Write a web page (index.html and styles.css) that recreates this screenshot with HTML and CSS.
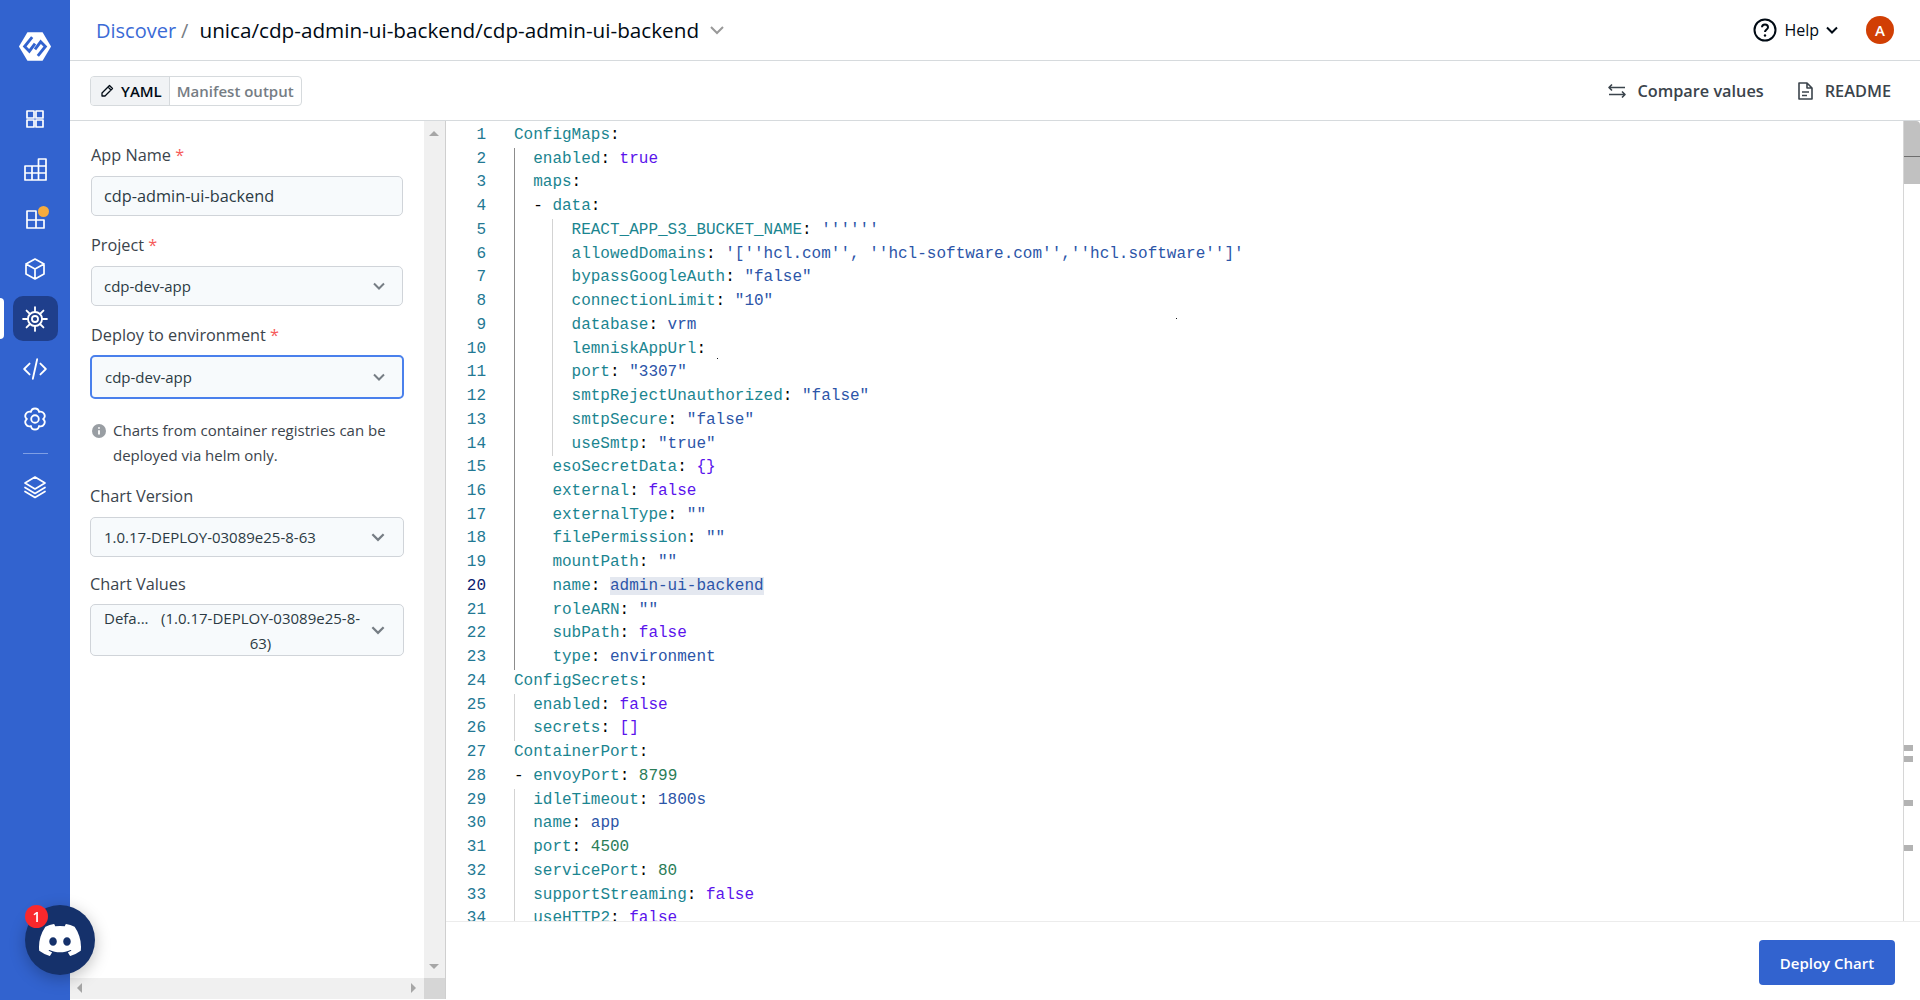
FILE: index.html
```html
<!DOCTYPE html>
<html>
<head>
	<meta name="viewport" content="width=device-width, initial-scale=1">
	<title>Deploy Chart</title>
	<link rel="stylesheet" href="styles.css">
</head>
<body>
	<nav class="sidebar">
		<svg class="logo" width="34" height="31" viewBox="0 0 36 32">
			<path class="logo-hex" d="M10 1H26L35 16L26 31H10L1 16Z"/>
			<path class="logo-cut" d="M15 6L7 16L12 21L18 13M21 26L29 16L24 11L18 19"/>
		</svg>
		<div class="nav-item">
			<svg width="24" height="24" viewBox="0 0 24 24"><rect x="4" y="4" width="7" height="7"/><rect x="13" y="4" width="7" height="7"/><rect x="4" y="13" width="7" height="7"/><rect x="13" y="13" width="7" height="7"/></svg>
		</div>
		<div class="nav-item">
			<svg width="24" height="24" viewBox="0 0 24 24"><path d="M2 9H15.500V2H23V23H2ZM2 16H23M9 9V23M15.500 9V23M15.500 9H23"/></svg>
		</div>
		<div class="nav-item">
			<svg width="24" height="24" viewBox="0 0 24 24"><path d="M4 4H13V21H4ZM4 13H21V21H13"/></svg>
			<span class="nav-dot"></span>
		</div>
		<div class="nav-item">
			<svg width="24" height="24" viewBox="0 0 24 24"><path d="M12 2L21 7V17L12 22L3 17V7ZM3 7L12 12L21 7M12 12V22"/></svg>
		</div>
		<div class="nav-item active">
			<svg width="26" height="26" viewBox="0 0 24 24"><circle cx="12" cy="12" r="6.500"/><circle cx="12" cy="12" r="2.800"/><path d="M12 1V5.500M12 18.500V23M1 12H5.500M18.500 12H23M4.200 4.200L7.400 7.400M16.600 16.600L19.800 19.800M4.200 19.800L7.400 16.600M16.600 7.400L19.800 4.200"/></svg>
		</div>
		<div class="nav-item">
			<svg width="26" height="26" viewBox="0 0 24 24"><path d="M7 7L2 12L7 17M17 7L22 12L17 17M14 3L10 21"/></svg>
		</div>
		<div class="nav-item">
			<svg width="26" height="26" viewBox="0 0 24 24"><circle cx="12" cy="12" r="3.500"/><path d="M19.500 12A3.800 3.800 0 0 0 15.750 5.500A3.800 3.800 0 0 0 8.250 5.500A3.800 3.800 0 0 0 4.500 12A3.800 3.800 0 0 0 8.250 18.500A3.800 3.800 0 0 0 15.750 18.500A3.800 3.800 0 0 0 19.500 12Z"/></svg>
		</div>
		<div class="nav-divider"></div>
		<div class="nav-item">
			<svg width="24" height="24" viewBox="0 0 24 24"><path d="M12 2L22 8L12 14L2 8ZM2 12.500L12 18.500L22 12.500M2 16.500L12 22.500L22 16.500"/></svg>
		</div>
	</nav>

	<div class="main">
		<header class="topbar">
			<a class="crumb">Discover</a>
			<span class="crumb-sep">/</span>
			<span class="app-title">unica/cdp-admin-ui-backend/cdp-admin-ui-backend</span>
			<svg class="title-caret" width="20" height="20" viewBox="0 0 20 20"><path d="M4 7L10 13L16 7"/></svg>
			<div class="topbar-right">
				<svg width="24" height="24" viewBox="0 0 24 24" class="help-icon"><circle cx="12" cy="12" r="10.500"/><path d="M9 9.300C9 5.500 15 5.500 15 9.300C15 11.500 12 11.500 12 14"/><circle class="help-dot" cx="12" cy="17.500" r="1.200"/></svg>
				<span class="help-text">Help</span>
				<svg class="help-caret" width="14" height="14" viewBox="0 0 14 14"><path d="M2 4.500L7 9.500L12 4.500"/></svg>
				<span class="avatar">A</span>
			</div>
		</header>

		<div class="toolbar">
			<div class="tabs">
				<div class="tab active">
					<svg width="14" height="14" viewBox="0 0 14 14"><path d="M9.500 1.500L12.500 4.500L5 12H2V9ZM8 3L11 6"/></svg>
					YAML
				</div>
				<div class="tab">Manifest output</div>
			</div>
			<div class="toolbar-right">
				<div class="tool-link">
					<svg width="20" height="20" viewBox="0 0 20 20"><path d="M2 6.500H18M5 3.500L2 6.500L5 9.500M18 13.500H2M15 10.500L18 13.500L15 16.500"/></svg>
					Compare values
				</div>
				<div class="tool-link readme">
					<svg width="16" height="18" viewBox="0 0 16 18"><path d="M2 1H10L15 6V17H2ZM10 1V6H15M5 10H12M5 13.500H10"/></svg>
					README
				</div>
			</div>
		</div>

		<div class="content">
			<aside class="form-panel">
				<div class="form-scroll">
					<label class="field-label">App Name <span class="req">*</span></label>
					<div class="input app-name">cdp-admin-ui-backend</div>

					<label class="field-label">Project <span class="req">*</span></label>
					<div class="input select">cdp-dev-app
						<svg class="caret" width="16" height="16" viewBox="0 0 16 16"><path d="M3 5.500L8 10.500L13 5.500"/></svg>
					</div>

					<label class="field-label env-label">Deploy to environment <span class="req">*</span></label>
					<div class="input select focused">cdp-dev-app
						<svg class="caret" width="16" height="16" viewBox="0 0 16 16"><path d="M3 5.500L8 10.500L13 5.500"/></svg>
					</div>

					<div class="note">
						<svg width="14" height="14" viewBox="0 0 14 14"><circle class="note-bg" cx="7" cy="7" r="7"/><path class="note-i" d="M7 6.200V10.500M7 3.300V4.800"/></svg>
						<p>Charts from container registries can be deployed via helm only.</p>
					</div>

					<label class="field-label chart-label">Chart Version</label>
					<div class="input select chart">1.0.17-DEPLOY-03089e25-8-63
						<svg class="caret" width="18" height="18" viewBox="0 0 16 16"><path d="M3 5.500L8 10.500L13 5.500"/></svg>
					</div>

					<label class="field-label values-label">Chart Values</label>
					<div class="input select chart values">
						<span class="values-name">Defa...</span>
						<span class="values-version">(1.0.17-DEPLOY-03089e25-8-63)</span>
						<svg class="caret" width="18" height="18" viewBox="0 0 16 16"><path d="M3 5.500L8 10.500L13 5.500"/></svg>
					</div>
				</div>
				<div class="scroll-v">
					<span class="arrow up"></span>
					<span class="arrow down"></span>
				</div>
				<div class="scroll-h">
					<span class="arrow left"></span>
					<span class="arrow right"></span>
				</div>
				<div class="scroll-corner"></div>
			</aside>

			<section class="editor">
				<div class="editor-body">
					<div class="gutter">
						<div>1</div><div>2</div><div>3</div><div>4</div><div>5</div><div>6</div><div>7</div><div>8</div><div>9</div><div>10</div>
						<div>11</div><div>12</div><div>13</div><div>14</div><div>15</div><div>16</div><div>17</div><div>18</div><div>19</div>
						<div class="current">20</div>
						<div>21</div><div>22</div><div>23</div><div>24</div><div>25</div><div>26</div><div>27</div><div>28</div><div>29</div><div>30</div>
						<div>31</div><div>32</div><div>33</div><div>34</div>
					</div>
					<div class="code">
						<div class="line"><span class="k">ConfigMaps</span>:</div>
						<div class="guide strong">
							<div class="line"><span class="k">enabled</span>: <span class="b">true</span></div>
							<div class="line"><span class="k">maps</span>:</div>
							<div class="line">- <span class="k">data</span>:</div>
							<div class="guide nested">
								<div class="line"><span class="k">REACT_APP_S3_BUCKET_NAME</span>: <span class="s">''''''</span></div>
								<div class="line"><span class="k">allowedDomains</span>: <span class="s">'[''hcl.com'', ''hcl-software.com'',''hcl.software'']'</span></div>
								<div class="line"><span class="k">bypassGoogleAuth</span>: <span class="s">"false"</span></div>
								<div class="line"><span class="k">connectionLimit</span>: <span class="s">"10"</span></div>
								<div class="line"><span class="k">database</span>: <span class="s">vrm</span></div>
								<div class="line"><span class="k">lemniskAppUrl</span>:</div>
								<div class="line"><span class="k">port</span>: <span class="s">"3307"</span></div>
								<div class="line"><span class="k">smtpRejectUnauthorized</span>: <span class="s">"false"</span></div>
								<div class="line"><span class="k">smtpSecure</span>: <span class="s">"false"</span></div>
								<div class="line"><span class="k">useSmtp</span>: <span class="s">"true"</span></div>
							</div>
							<div class="line">  <span class="k">esoSecretData</span>: <span class="b">{}</span></div>
							<div class="line">  <span class="k">external</span>: <span class="b">false</span></div>
							<div class="line">  <span class="k">externalType</span>: <span class="s">""</span></div>
							<div class="line">  <span class="k">filePermission</span>: <span class="s">""</span></div>
							<div class="line">  <span class="k">mountPath</span>: <span class="s">""</span></div>
							<div class="line">  <span class="k">name</span>: <span class="s mark">admin-ui-backend</span></div>
							<div class="line">  <span class="k">roleARN</span>: <span class="s">""</span></div>
							<div class="line">  <span class="k">subPath</span>: <span class="b">false</span></div>
							<div class="line">  <span class="k">type</span>: <span class="s">environment</span></div>
						</div>
						<div class="line"><span class="k">ConfigSecrets</span>:</div>
						<div class="guide">
							<div class="line"><span class="k">enabled</span>: <span class="b">false</span></div>
							<div class="line"><span class="k">secrets</span>: <span class="b">[]</span></div>
						</div>
						<div class="line"><span class="k">ContainerPort</span>:</div>
						<div class="line">- <span class="k">envoyPort</span>: <span class="n">8799</span></div>
						<div class="guide">
							<div class="line"><span class="k">idleTimeout</span>: <span class="s">1800s</span></div>
							<div class="line"><span class="k">name</span>: <span class="s">app</span></div>
							<div class="line"><span class="k">port</span>: <span class="n">4500</span></div>
							<div class="line"><span class="k">servicePort</span>: <span class="n">80</span></div>
							<div class="line"><span class="k">supportStreaming</span>: <span class="b">false</span></div>
							<div class="line"><span class="k">useHTTP2</span>: <span class="b">false</span></div>
						</div>
						<span class="speck s1"></span>
						<span class="speck s2"></span>
					</div>
					<div class="ruler">
						<div class="slider"><span class="slider-line"></span></div>
						<span class="mark-tick t1"></span>
						<span class="mark-tick t2"></span>
						<span class="mark-tick t3"></span>
						<span class="mark-tick t4"></span>
					</div>
				</div>
				<footer class="editor-foot">
					<button class="deploy-btn">Deploy Chart</button>
				</footer>
			</section>
		</div>
	</div>

	<div class="discord">
		<svg width="42" height="42" viewBox="0 0 24 24"><path d="M20.317 4.37a19.791 19.791 0 0 0-4.885-1.515.074.074 0 0 0-.079.037c-.21.375-.444.864-.608 1.25a18.27 18.27 0 0 0-5.487 0 12.64 12.64 0 0 0-.617-1.25.077.077 0 0 0-.079-.037A19.736 19.736 0 0 0 3.677 4.37a.07.07 0 0 0-.032.027C.533 9.046-.32 13.58.099 18.057a.082.082 0 0 0 .031.057 19.9 19.9 0 0 0 5.993 3.03.078.078 0 0 0 .084-.028 14.09 14.09 0 0 0 1.226-1.994.076.076 0 0 0-.041-.106 13.107 13.107 0 0 1-1.872-.892.077.077 0 0 1-.008-.128 10.2 10.2 0 0 0 .372-.292.074.074 0 0 1 .077-.01c3.928 1.793 8.18 1.793 12.062 0a.074.074 0 0 1 .078.01c.12.098.246.198.373.292a.077.077 0 0 1-.006.127 12.299 12.299 0 0 1-1.873.892.077.077 0 0 0-.041.107c.36.698.772 1.362 1.225 1.993a.076.076 0 0 0 .084.028 19.839 19.839 0 0 0 6.002-3.03.077.077 0 0 0 .032-.054c.5-5.177-.838-9.674-3.549-13.66a.061.061 0 0 0-.031-.03zM8.02 15.33c-1.183 0-2.157-1.085-2.157-2.419 0-1.333.956-2.419 2.157-2.419 1.21 0 2.176 1.096 2.157 2.42 0 1.333-.956 2.418-2.157 2.418zm7.975 0c-1.183 0-2.157-1.085-2.157-2.419 0-1.333.955-2.419 2.157-2.419 1.21 0 2.176 1.096 2.157 2.42 0 1.333-.946 2.418-2.157 2.418z"/></svg>
		<span class="discord-badge">1</span>
	</div>
</body>
</html>
```

FILE: styles.css
```css
* {
	box-sizing: border-box;
}
body {
	margin: 0;
	height: 1000px;
	overflow: hidden;
	display: flex;
	background-color: #ffffff;
	font-family: "Open Sans", Arial, sans-serif;
	font-size: 14px;
	color: #2c3a44;
}

/* left nav */
.sidebar {
	width: 70px;
	flex-shrink: 0;
	background-color: #3263cf;
	display: flex;
	flex-direction: column;
	align-items: center;
	padding-top: 31px;
	position: relative;
}
.logo {
	margin-bottom: 34px;
}
.logo-hex {
	fill: #ffffff;
}
.logo-cut {
	fill: none;
	stroke: #3263cf;
	stroke-width: 3;
}
.nav-item {
	width: 45px;
	height: 45px;
	margin-bottom: 5px;
	border-radius: 10px;
	display: flex;
	align-items: center;
	justify-content: center;
	position: relative;
}
.nav-item svg {
	fill: none;
	stroke: #ffffff;
	stroke-width: 1.700;
	stroke-linejoin: round;
	stroke-linecap: round;
}
.nav-item.active {
	background-color: #1f3f8c;
}
.nav-item.active::before {
	content: "";
	position: absolute;
	left: -13px;
	top: 2px;
	width: 4px;
	height: 41px;
	background-color: #ffffff;
	border-radius: 0 4px 4px 0;
}
.nav-dot {
	position: absolute;
	top: 10px;
	right: 9px;
	width: 11px;
	height: 11px;
	border-radius: 50%;
	background-color: #f6ac3f;
}
.nav-divider {
	width: 25px;
	height: 1px;
	background-color: #7f9fe4;
	margin: 7px 0 10px;
}

/* page */
.main {
	flex: 1;
	min-width: 0;
	display: flex;
	flex-direction: column;
}
.topbar {
	height: 61px;
	flex-shrink: 0;
	display: flex;
	align-items: center;
	padding-left: 26px;
	border-bottom: 1px solid #d6dadd;
}
.crumb {
	font-size: 20px;
	color: #3b6bd6;
}
.crumb-sep {
	font-size: 20px;
	color: #767d84;
	margin-left: 5px;
}
.app-title {
	font-size: 20.700px;
	font-weight: 500;
	color: #000a14;
	margin-left: 11px;
}
.title-caret {
	margin-left: 8px;
	fill: none;
	stroke: #999999;
	stroke-width: 2;
}
.topbar-right {
	margin-left: auto;
	display: flex;
	align-items: center;
	padding-right: 26px;
}
.help-icon {
	fill: none;
	stroke: #000a14;
	stroke-width: 2;
}
.help-dot {
	fill: #000a14;
	stroke: none;
}
.help-text {
	margin-left: 7px;
	font-size: 16px;
	color: #000a14;
}
.help-caret {
	margin-left: 6px;
	fill: none;
	stroke: #000a14;
	stroke-width: 2;
}
.avatar {
	margin-left: 27px;
	width: 28px;
	height: 28px;
	border-radius: 50%;
	background-color: #d13f04;
	color: #ffffff;
	font-size: 15px;
	font-weight: 600;
	display: flex;
	align-items: center;
	justify-content: center;
}

.toolbar {
	height: 60px;
	flex-shrink: 0;
	display: flex;
	align-items: center;
	padding: 0 29px 0 20px;
	border-bottom: 1px solid #d6dadd;
}
.tabs {
	display: flex;
	height: 30px;
	border: 1px solid #d6dadd;
	border-radius: 4px;
	overflow: hidden;
}
.tab {
	display: flex;
	align-items: center;
	gap: 7px;
	padding: 0 7px;
	font-size: 15px;
	font-weight: 600;
	color: #767d84;
}
.tab.active {
	background-color: #f1f3f5;
	color: #000a14;
	border-right: 1px solid #d6dadd;
	padding: 0 7px 0 9px;
}
.tab svg {
	fill: none;
	stroke: #000a14;
	stroke-width: 1.300;
	stroke-linejoin: round;
}
.toolbar-right {
	margin-left: auto;
	display: flex;
	align-items: center;
	gap: 33px;
}
.tool-link {
	display: flex;
	align-items: center;
	gap: 10px;
	font-size: 16.300px;
	font-weight: 600;
	color: #3b444c;
}
.tool-link svg {
	fill: none;
	stroke: #3b444c;
	stroke-width: 1.600;
	stroke-linejoin: round;
}
.tool-link.readme {
	gap: 12px;
}

.content {
	flex: 1;
	min-height: 0;
	display: flex;
}

/* form column */
.form-panel {
	width: 376px;
	height: 878px;
	flex-shrink: 0;
	display: grid;
	grid-template-columns: 354px 21px;
	grid-template-rows: 857px 21px;
	border-right: 1px solid #cfcfcf;
}
.form-scroll {
	padding: 22px 20px 0 20px;
	overflow: hidden;
}
.field-label {
	display: block;
	font-size: 16.300px;
	line-height: 24px;
	padding-left: 1px;
	margin-bottom: 9px;
	color: #3b444c;
}
.req {
	color: #f65a5a;
}
.input {
	height: 40px;
	margin: 0 1px 17px;
	padding-left: 12px;
	background-color: #f7fafc;
	border: 1px solid #d0d4d9;
	border-radius: 5px;
	font-size: 15px;
	display: flex;
	align-items: center;
	position: relative;
}
.app-name {
	font-size: 16.300px;
}
.caret {
	position: absolute;
	right: 15px;
	top: 50%;
	margin-top: -8px;
	fill: none;
	stroke: #767d84;
	stroke-width: 2;
}
.env-label {
	margin-bottom: 8px;
}
.focused {
	height: 44px;
	margin: 0;
	padding-left: 13px;
	border: 2px solid #4a80ec;
}
.note {
	display: flex;
	gap: 7px;
	margin: 19px 0 16px 2px;
}
.note svg {
	flex-shrink: 0;
	margin-top: 6px;
}
.note-bg {
	fill: #999ea3;
}
.note-i {
	stroke: #ffffff;
	stroke-width: 1.800;
}
.note p {
	margin: 0;
	font-size: 15px;
	line-height: 25px;
	color: #3b444c;
}
.chart {
	margin: 0 0 15px;
	font-size: 15px;
	padding-left: 13px;
}
.chart-label,
.values-label {
	padding-left: 0;
}
.chart .caret {
	right: 16px;
	margin-top: -9px;
}
.values-label {
	margin-bottom: 8px;
}
.values {
	height: 52px;
	line-height: 25px;
	align-items: flex-start;
	padding-top: 1px;
	gap: 11px;
}
.values-version {
	width: 202px;
	text-align: center;
}

/* fake scrollbars */
.scroll-v,
.scroll-h {
	background-color: #f0f0f0;
	position: relative;
}
.scroll-corner {
	background-color: #d6d6d6;
}
.arrow {
	position: absolute;
	width: 0;
	height: 0;
	border: 5px solid transparent;
}
.arrow.up {
	top: 5px;
	left: 5px;
	border-bottom: 5px solid #a6a6a6;
}
.arrow.down {
	bottom: 4px;
	left: 5px;
	border-top: 5px solid #a6a6a6;
}
.arrow.left {
	left: 2px;
	top: 5px;
	border-right: 5px solid #a6a6a6;
}
.arrow.right {
	right: 3px;
	top: 5px;
	border-left: 5px solid #a6a6a6;
}

/* yaml editor */
.editor {
	flex: 1;
	min-width: 0;
	display: flex;
	flex-direction: column;
}
.editor-body {
	flex: 1;
	min-height: 0;
	display: flex;
	overflow: hidden;
}
.gutter,
.code {
	padding-top: 3px;
	font-family: "Liberation Mono", "DejaVu Sans Mono", monospace;
	font-size: 16px;
	line-height: 23.740px;
}
.gutter {
	width: 68px;
	flex-shrink: 0;
	padding-right: 28px;
	text-align: right;
	color: #237893;
}
.gutter .current {
	color: #0b216f;
}
.code {
	flex: 1;
	min-width: 0;
	color: #000000;
	position: relative;
}
.line {
	white-space: pre;
}
.guide {
	padding-left: 19.200px;
	box-shadow: inset 1px 0 0 #d3d3d3;
}
.guide.strong {
	box-shadow: inset 1px 0 0 #8c8c8c;
}
.guide.nested {
	margin-left: 19.200px;
}
.k {
	color: #1b8590;
}
.s {
	color: #2c55a8;
}
.b {
	color: #5a14ec;
}
.n {
	color: #2b7d58;
}
.mark {
	background-color: #e4e8f0;
}
.speck {
	position: absolute;
	width: 1px;
	height: 1px;
	background-color: #14171a;
}
.s1 { left: 662px; top: 197px; }
.s2 { left: 203px; top: 237px; }
.ruler {
	width: 17px;
	flex-shrink: 0;
	border-left: 1px solid #d6d6d6;
	position: relative;
}
.slider {
	height: 63px;
	background-color: #c1c1c1;
	border-top-right-radius: 4px;
	position: relative;
}
.slider-line {
	position: absolute;
	left: 0;
	right: 0;
	top: 35px;
	height: 1px;
	background-color: #6e6e6e;
}
.mark-tick {
	position: absolute;
	left: 0;
	width: 9px;
	height: 6px;
	background-color: #b3b3b3;
}
.t1 { top: 624px; }
.t2 { top: 635px; }
.t3 { top: 679px; }
.t4 { top: 724px; }

.editor-foot {
	height: 79px;
	flex-shrink: 0;
	display: flex;
	justify-content: flex-end;
	align-items: flex-start;
	padding: 18px 25px 0 0;
	border-top: 1px solid #ececec;
}
.deploy-btn {
	width: 136px;
	height: 45px;
	border: none;
	border-radius: 4px;
	background-color: #3263cf;
	color: #ffffff;
	font-family: inherit;
	font-size: 15px;
	font-weight: 600;
}

/* chat launcher floats over the nav */
.discord {
	position: fixed;
	left: 25px;
	top: 905px;
	width: 70px;
	height: 70px;
	border-radius: 50%;
	background-color: #15316b;
	box-shadow: 0 4px 16px rgba(0, 0, 0, 0.25);
	display: flex;
	align-items: center;
	justify-content: center;
}
.discord svg {
	fill: #ffffff;
}
.discord-badge {
	position: absolute;
	left: 0;
	top: 0;
	width: 23px;
	height: 23px;
	border-radius: 50%;
	background-color: #f9282c;
	color: #ffffff;
	font-size: 14px;
	font-weight: 600;
	display: flex;
	align-items: center;
	justify-content: center;
}
```
